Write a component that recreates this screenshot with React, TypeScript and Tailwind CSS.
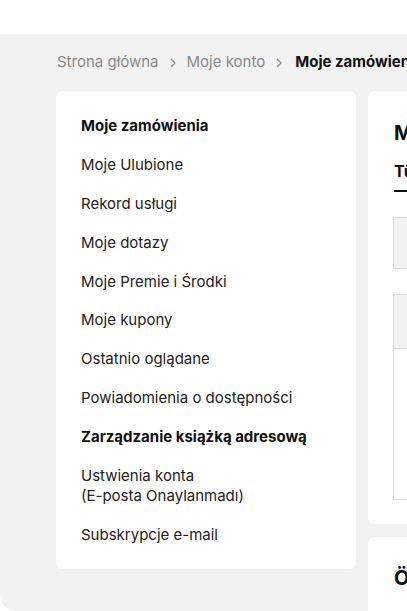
import React from "react";

const items: { label: string[]; bold?: boolean }[] = [
  { label: ["Moje zamówienia"], bold: true },
  { label: ["Moje Ulubione"] },
  { label: ["Rekord usługi"] },
  { label: ["Moje dotazy"] },
  { label: ["Moje Premie i Środki"] },
  { label: ["Moje kupony"] },
  { label: ["Ostatnio oglądane"] },
  { label: ["Powiadomienia o dostępności"] },
  { label: ["Zarządzanie książką adresową"], bold: true },
  { label: ["Ustwienia konta", "(E-posta Onaylanmadı)"] },
  { label: ["Subskrypcje e-mail"] },
];

function Chevron() {
  return (
    <svg width="10" height="12" viewBox="0 0 10 12" className="inline-block">
      <path d="M3 2 L7 6 L3 10" fill="none" stroke="#8a8a8a" strokeWidth="1.2" />
    </svg>
  );
}

export default function App() {
  return (
    <div
      className="w-[407px] h-[611px] overflow-hidden bg-white"
      style={{ fontFamily: "Inter, 'Noto Sans', sans-serif" }}
    >
      <div className="h-[34px] bg-white" />
      <div className="h-[577px] bg-[#f2f2f2] rounded-bl-[16px] pl-[56px] overflow-hidden">
        <div className="h-[57px] flex items-center whitespace-nowrap text-[15px] leading-[20px] pb-[1px]">
          <span className="text-[#8a8a8a] ml-[1px]">Strona główna</span>
          <span className="mx-[9px]">
            <Chevron />
          </span>
          <span className="text-[#8a8a8a]">Moje konto</span>
          <span className="ml-[9px] mr-[11px]">
            <Chevron />
          </span>
          <span className="text-[#111] font-bold">Moje zamówienia</span>
        </div>
        <div className="flex gap-[12px] items-start">
          <div className="w-[300px] shrink-0 bg-white rounded-[6px] pt-[25px] pb-[24px] pl-[25px] flex flex-col gap-[18.9px]">
            {items.map((it, i) => (
              <div
                key={i}
                className={`text-[15px] leading-[20px] ${it.bold ? "font-bold text-[#111]" : "text-[#222]"}`}
              >
                {it.label.map((l, j) => (
                  <div key={j}>{l}</div>
                ))}
              </div>
            ))}
          </div>
          <div className="flex flex-col gap-[13px] shrink-0">
            <div className="w-[300px] h-[433px] bg-white rounded-[6px] pl-[26px] pt-[29px]">
              <div className="text-[20px] leading-[26px] font-bold text-[#111] whitespace-nowrap">Moje zamówienia</div>
              <div className="mt-[15px] inline-block">
                <div className="text-[16px] leading-[20px] font-bold text-[#111] pb-[9px] border-b-2 border-[#111] whitespace-nowrap">
                  Tüm zamówienia
                </div>
              </div>
              <div className="mt-[25px] ml-[-1px] h-[52px] border border-[#d9d9d9] bg-[#f2f2f2]" />
              <div className="mt-[25px] ml-[-1px] h-[206px] border border-[#d9d9d9] bg-white">
                <div className="h-[54px] bg-[#f2f2f2] border-b border-[#d9d9d9]" />
              </div>
            </div>
            <div className="w-[300px] h-[100px] bg-white rounded-[6px] pl-[26px] pt-[28px]">
              <div className="text-[20px] leading-[26px] font-bold text-[#111] whitespace-nowrap">Öneriler</div>
            </div>
          </div>
        </div>
      </div>
    </div>
  );
}
